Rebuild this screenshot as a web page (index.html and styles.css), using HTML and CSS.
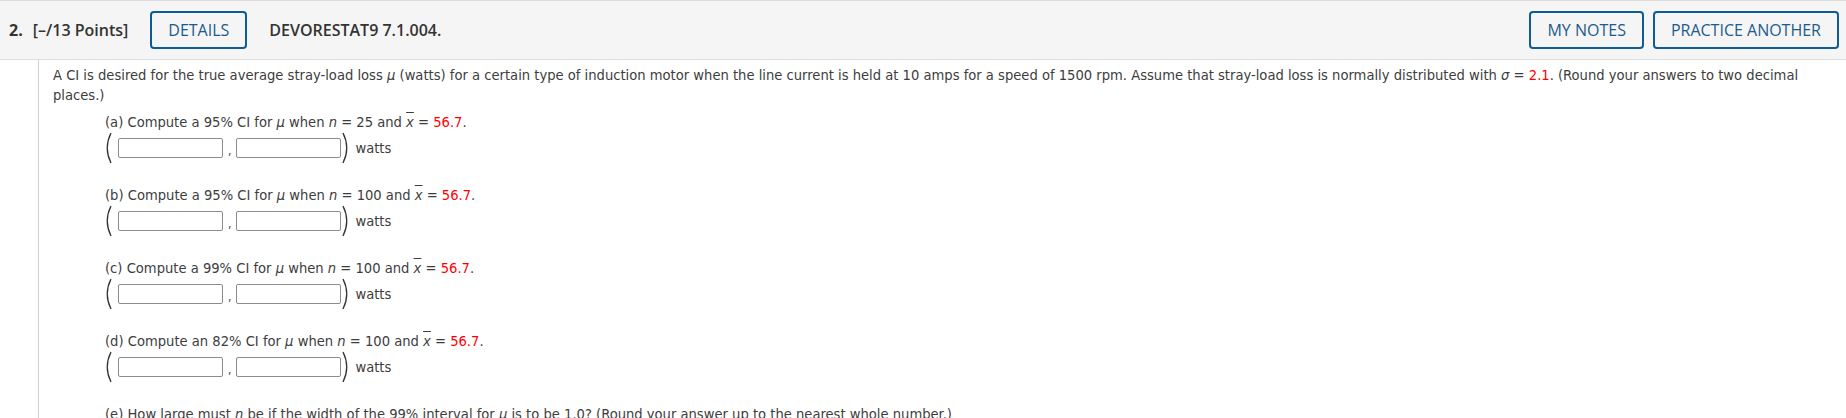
FILE: index.html
```html
<!DOCTYPE html>
<html>
<head>
<meta charset="utf-8">
<link rel="stylesheet" href="styles.css">
</head>
<body>
<header class="qhead">
  <span class="qnum">2.</span>
  <span class="qpts">[–/13 Points]</span>
  <span class="btn btn-details">DETAILS</span>
  <span class="qid">DEVORESTAT9 7.1.004.</span>
  <span class="spacer"></span>
  <span class="btn">MY NOTES</span>
  <span class="btn">PRACTICE ANOTHER</span>
</header>
<main class="qbody">
  <p class="intro">A CI is desired for the true average stray-load loss <i class="m">μ</i> (watts) for a certain type of induction motor when the line current is held at 10 amps for a speed of 1500 rpm. Assume that stray-load loss is normally distributed with <i class="m">σ</i> = <span class="red">2.1</span>. (Round your answers to two decimal places.)</p>

  <div class="part">
    <div class="ptext">(a) Compute a 95% CI for <i class="m">μ</i> when <i class="m">n</i> = 25 and <span class="xbar">x</span> = <span class="red">56.7</span>.</div>
    <div class="row">
      <svg class="paren" width="10" height="32" viewBox="0 0 10 32"><path d="M8 1 Q0.5 16 8 31" fill="none" stroke="#333" stroke-width="1.3"/></svg>
      <span class="box"></span><span class="comma">,</span><span class="box"></span>
      <svg class="paren" width="10" height="32" viewBox="0 0 10 32"><path d="M2 1 Q9.5 16 2 31" fill="none" stroke="#333" stroke-width="1.3"/></svg>
      <span class="unit">watts</span>
    </div>
  </div>

  <div class="part">
    <div class="ptext">(b) Compute a 95% CI for <i class="m">μ</i> when <i class="m">n</i> = 100 and <span class="xbar">x</span> = <span class="red">56.7</span>.</div>
    <div class="row">
      <svg class="paren" width="10" height="32" viewBox="0 0 10 32"><path d="M8 1 Q0.5 16 8 31" fill="none" stroke="#333" stroke-width="1.3"/></svg>
      <span class="box"></span><span class="comma">,</span><span class="box"></span>
      <svg class="paren" width="10" height="32" viewBox="0 0 10 32"><path d="M2 1 Q9.5 16 2 31" fill="none" stroke="#333" stroke-width="1.3"/></svg>
      <span class="unit">watts</span>
    </div>
  </div>

  <div class="part">
    <div class="ptext">(c) Compute a 99% CI for <i class="m">μ</i> when <i class="m">n</i> = 100 and <span class="xbar">x</span> = <span class="red">56.7</span>.</div>
    <div class="row">
      <svg class="paren" width="10" height="32" viewBox="0 0 10 32"><path d="M8 1 Q0.5 16 8 31" fill="none" stroke="#333" stroke-width="1.3"/></svg>
      <span class="box"></span><span class="comma">,</span><span class="box"></span>
      <svg class="paren" width="10" height="32" viewBox="0 0 10 32"><path d="M2 1 Q9.5 16 2 31" fill="none" stroke="#333" stroke-width="1.3"/></svg>
      <span class="unit">watts</span>
    </div>
  </div>

  <div class="part">
    <div class="ptext">(d) Compute an 82% CI for <i class="m">μ</i> when <i class="m">n</i> = 100 and <span class="xbar">x</span> = <span class="red">56.7</span>.</div>
    <div class="row">
      <svg class="paren" width="10" height="32" viewBox="0 0 10 32"><path d="M8 1 Q0.5 16 8 31" fill="none" stroke="#333" stroke-width="1.3"/></svg>
      <span class="box"></span><span class="comma">,</span><span class="box"></span>
      <svg class="paren" width="10" height="32" viewBox="0 0 10 32"><path d="M2 1 Q9.5 16 2 31" fill="none" stroke="#333" stroke-width="1.3"/></svg>
      <span class="unit">watts</span>
    </div>
  </div>

  <div class="part">
    <div class="ptext">(e) How large must <i class="m">n</i> be if the width of the 99% interval for <i class="m">μ</i> is to be 1.0? (Round your answer up to the nearest whole number.)</div>
  </div>
</main>
</body>
</html>
```

FILE: styles.css
```css
* { box-sizing: border-box; }
html, body { margin: 0; padding: 0; background: #fff; }
body { width: 1846px; height: 418px; overflow: hidden; }

.qhead {
  display: flex;
  align-items: center;
  height: 60px;
  padding: 0 7px 0 9px;
  background: #f5f5f5;
  border-top: 1px solid #dcdcdc;
  border-bottom: 1px solid #dcdcdc;
  font-family: "Open Sans", "Liberation Sans", sans-serif;
  font-size: 16px;
  color: #333;
}
.qnum { font-weight: 700; margin-right: 10px; }
.qpts { font-weight: 600; margin-right: 22px; }
.qid { font-weight: 600; margin-left: 22px; }
.spacer { flex: 1; }
.btn {
  display: inline-flex;
  align-items: center;
  height: 38px;
  padding: 0 16px;
  border: 2px solid #0c5d96;
  border-radius: 4px;
  color: #1b5b8e;
  font-weight: 400;
}
.btn + .btn { margin-left: 9px; }

.qbody {
  margin-left: 38px;
  border-left: 1px solid #d0d0d0;
  padding: 5px 10px 0 14px;
  font-family: "DejaVu Sans Condensed", "DejaVu Sans", sans-serif;
  font-size: 14.6px;
  color: #3d3d3d;
  height: 358px;
}
.intro { margin: 0; line-height: 20px; }
.m { font-style: italic; }
.red { color: #f00; }
.xbar { font-style: italic; text-decoration: overline; }

.part { margin: 7px 0 0 52px; }
.part + .part { margin-top: 21px; }
.ptext { line-height: 20px; white-space: nowrap; }
.row { display: flex; align-items: center; height: 32px; }
.paren { display: block; }
.row .paren:first-child { margin-left: -2px; margin-right: 5px; }
.box {
  width: 105px;
  height: 20px;
  border: 1px solid #8c8c8c;
  border-radius: 2px;
  background: #fff;
}
.comma { align-self: flex-end; margin: 0 5px 7px; font-size: 12px; line-height: 12px; }
.unit { margin-left: 4px; margin-top: -2px; }
```
